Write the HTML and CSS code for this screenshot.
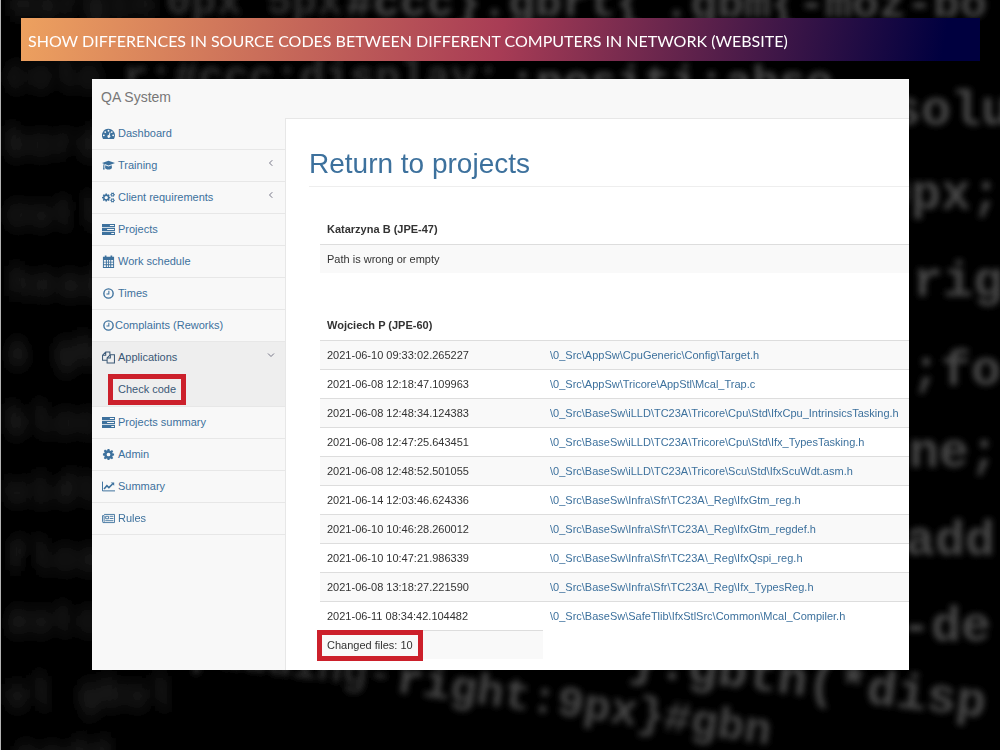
FILE: index.html
```html
<!DOCTYPE html>
<html lang="en">

<head>
    <meta charset="UTF-8">
    <meta name="viewport" content="width=device-width, initial-scale=1.0">
    <title>QA System - Check code</title>
    <link rel="stylesheet" href="styles.css">
</head>

<body>
    <!-- blurred code behind the slide -->
    <svg class="backdrop" viewBox="0 0 1000 750" preserveAspectRatio="xMidYMid slice" aria-hidden="true">
        <defs>
            <filter id="soft" x="-10%" y="-50%" width="120%" height="200%">
                <feGaussianBlur stdDeviation="3" />
            </filter>
            <filter id="far" x="-20%" y="-50%" width="140%" height="200%">
                <feGaussianBlur stdDeviation="6 9" />
            </filter>
        </defs>
        <g class="code-far" filter="url(#far)">
            <text x="10" y="16">margin</text>
            <text x="4" y="88">colo</text>
            <text x="4" y="156">bord</text>
            <text x="4" y="226">outl</text>
            <text x="8" y="296">head</text>
            <text x="4" y="364">a gb</text>
            <text x="4" y="434">bloc</text>
            <text x="4" y="502">widt</text>
            <text x="4" y="570">floa</text>
            <text x="4" y="632">auto</text>
            <text x="4" y="706">ul gbul</text>
            <text x="14" y="768">padd</text>
        </g>
        <g class="code-near" filter="url(#soft)">
            <text class="dim" x="165" y="14">0px 5px</text>
            <text x="345" y="16">#ccc}.gbrt{</text>
            <text x="662" y="17">.gbm{-moz-bo</text>
            <text class="dim" x="122" y="90">r:#ccc;display:</text>
            <text x="508" y="96">;positi:abso</text>
            <text class="big" x="890" y="125">solu</text>
            <text class="big" x="880" y="209">0px;</text>
            <text class="big" x="912" y="296">rig</text>
            <text class="big" x="910" y="385">;fo</text>
            <text class="big" x="908" y="467">ne;</text>
            <text class="big" x="904" y="555">add</text>
            <text class="big" x="900" y="641">-de</text>
            <text class="big" x="626" y="674" transform="rotate(7 626 674)">}.gbtn(*disp</text>
            <text class="dim" x="190" y="664" transform="rotate(7 190 664)">padding-</text>
            <text x="394" y="692" transform="rotate(8 394 692)">right:9px}#gbn</text>
        </g>
    </svg>

    <svg class="sprite" aria-hidden="true">
        <symbol id="i-dashboard" viewBox="0 0 14 14">
            <path fill-rule="evenodd" d="M7 2a7 7 0 0 1 7 7c0 1.300-.4 2.600-1 3.700a.5.5 0 0 1-.4.300H1.400a.5.5 0 0 1-.4-.3A7 7 0 0 1 7 2zM2 8a1 1 0 1 0 0 2 1 1 0 0 0 0-2zm1.500-3.500a1 1 0 1 0 0 2 1 1 0 0 0 0-2zM7 3a1 1 0 1 0 0 2 1 1 0 0 0 0-2zm3.500 1.500a1 1 0 1 0 0 2 1 1 0 0 0 0-2zM12 8a1 1 0 1 0 0 2 1 1 0 0 0 0-2zM8.300 5.700l-1 3a1.500 1.500 0 1 0 1 .3l.8-3z" />
        </symbol>
        <symbol id="i-training" viewBox="0 0 16 14">
            <path d="M8 1l8 3-8 3-4.600-1.700c-.4.400-.6 1.100-.6 1.800.4.400.5.900 0 1.300l.5 3.600H1.200l.5-3.600c-.5-.4-.4-.9 0-1.300 0-.8.2-1.500.5-2.300L0 4z" />
            <path d="M4 6.800l4 1.500 4-1.500.2 3c0 1.200-2 2.200-4.200 2.200s-4.200-1-4.200-2.200z" />
        </symbol>
        <symbol id="i-gear" viewBox="0 0 14 14">
            <path fill-rule="evenodd" d="M6 1h2l.3 1.700 1 .4 1.400-1 1.400 1.400-1 1.400.4 1L13 6v2l-1.500.4-.4 1 1 1.400-1.400 1.400-1.400-1-1 .4L8 13H6l-.3-1.400-1-.4-1.400 1-1.400-1.400 1-1.400-.4-1L1 8V6l1.500-.5.4-1-1-1.400 1.400-1.400 1.400 1 1-.4zM7 5a2 2 0 1 0 0 4 2 2 0 0 0 0-4z" />
        </symbol>
        <symbol id="i-gears" viewBox="0 0 16 14">
            <path fill-rule="evenodd" d="M4.300 2h1.800l.2 1.400.8.300 1.100-.8 1.300 1.300-.8 1.100.3.800 1.300.2v1.600l-1.300.2-.3.800.8 1.100-1.300 1.300-1.100-.8-.8.300L6.100 12H4.300l-.2-1.200-.8-.3-1.100.8L.9 10l.8-1.100-.3-.8L0 7.900V6.300l1.400-.2.300-.8-.8-1.100 1.300-1.300 1.100.8.800-.3zM5.200 5a2.100 2.100 0 1 0 0 4.200 2.100 2.100 0 0 0 0-4.200z" />
            <path fill-rule="evenodd" d="M12.200.8l.8.600.8-.6 1 .6-.2 1 1.200.7v1l-1.200.4.200 1.100-1 .6-.8-.7-.8.700-1-.6.200-1.100-1.100-.4v-1l1.100-.5-.2-1.200zM13 2.600a1 1 0 1 0 0 2 1 1 0 0 0 0-2z" />
            <path fill-rule="evenodd" d="M12.200 7.800l.8.600.8-.6 1 .6-.2 1 1.200.7v1l-1.200.4.200 1.100-1 .6-.8-.7-.8.700-1-.6.200-1.100-1.100-.4v-1l1.100-.5-.2-1.200zM13 9.600a1 1 0 1 0 0 2 1 1 0 0 0 0-2z" />
        </symbol>
        <symbol id="i-tasks" viewBox="0 0 14 14">
            <path fill-rule="evenodd" d="M0 1h14v3.500H0zm8.500 1.200v1.100H13V2.200zM0 5.300h14v3.500H0zm5.500 1.200v1.100H13V6.500zM0 9.600h14V13H0zm10 1.200v1.100h3v-1.100z" />
        </symbol>
        <symbol id="i-calendar" viewBox="0 0 14 14">
            <path fill-rule="evenodd" d="M1 2h2V.5h1.800V2h4.400V.5H11V2h2v12H1zm1 3.500v1.800h2.200V5.500zm3.200 0v1.800h1.400V5.500zm2.300 0v1.800h1.400V5.500zm2.400 0v1.800H12V5.500zM2 8.200V10h2.200V8.200zm3.200 0V10h1.400V8.200zm2.300 0V10h1.400V8.200zm2.400 0V10H12V8.200zM2 11v2h2.200v-2zm3.200 0v2h1.400v-2zm2.300 0v2h1.400v-2zm2.400 0v2H12v-2z" />
        </symbol>
        <symbol id="i-clock" viewBox="0 0 14 14">
            <circle class="line" cx="7" cy="7" r="5" stroke-width="1.500" />
            <path class="line" d="M7.400 4v3.500H4.800" stroke-width="1.100" />
        </symbol>
        <symbol id="i-copy" viewBox="0 0 14 14">
            <path class="line" d="M5 10H.6V4.500L4 1h4.500v3M4 1v3.500H.6M5.500 7.500L9 4h4.400v9H5.500zM9 4v3.500H5.500" stroke-width="1.100" />
        </symbol>
        <symbol id="i-chart" viewBox="0 0 16 14">
            <path class="line" d="M.6 1v11.400H16" stroke-width="1.200" />
            <path class="line" d="M2.500 10l3.500-4 2.500 2.400L13 3.900" stroke-width="1.900" />
            <path d="M10.800 2H15v4.200z" />
        </symbol>
        <symbol id="i-news" viewBox="0 0 16 14">
            <path class="line" d="M2.600 2h12.800v10H1.800c-.8 0-1.200-.4-1.200-1.200V3.500h2v7.300c0 .8-.3 1.200-.9 1.200" stroke-width="1.100" />
            <path class="line" d="M4.500 4.300h3.600v3H4.500zM9.500 4.300h4.500M9.500 7h4.500M4 9.700h10" stroke-width="1.100" />
        </symbol>
        <symbol id="i-left" viewBox="0 0 8 8">
            <path class="line" d="M5.300 1.200L2.500 4l2.800 2.800" />
        </symbol>
        <symbol id="i-down" viewBox="0 0 8 8">
            <path class="line" d="M1 2.500l3 3 3-3" />
        </symbol>
    </svg>

    <div class="slide">
        <header class="banner">SHOW DIFFERENCES IN SOURCE CODES BETWEEN DIFFERENT COMPUTERS IN NETWORK (WEBSITE)</header>

        <div class="window">
            <div class="navbar">QA System</div>
            <nav class="sidebar">
                <ul class="menu">
                    <li><a href="#"><svg class="icon"><use href="#i-dashboard" /></svg>Dashboard</a></li>
                    <li><a href="#"><svg class="icon"><use href="#i-training" /></svg>Training<svg class="arrow"><use href="#i-left" /></svg></a></li>
                    <li><a href="#"><svg class="icon"><use href="#i-gears" /></svg>Client requirements<svg class="arrow"><use href="#i-left" /></svg></a></li>
                    <li><a href="#"><svg class="icon"><use href="#i-tasks" /></svg>Projects</a></li>
                    <li><a href="#"><svg class="icon"><use href="#i-calendar" /></svg>Work schedule</a></li>
                    <li><a href="#"><svg class="icon"><use href="#i-clock" /></svg>Times</a></li>
                    <li><a href="#" class="tight"><svg class="icon"><use href="#i-clock" /></svg>Complaints (Reworks)</a></li>
                    <li class="active">
                        <a href="#"><svg class="icon"><use href="#i-copy" /></svg>Applications<svg class="arrow"><use href="#i-down" /></svg></a>
                        <ul class="submenu">
                            <li><a href="#"><span class="marked">Check code</span></a></li>
                        </ul>
                    </li>
                    <li><a href="#"><svg class="icon"><use href="#i-tasks" /></svg>Projects summary</a></li>
                    <li><a href="#"><svg class="icon"><use href="#i-gear" /></svg>Admin</a></li>
                    <li><a href="#"><svg class="icon"><use href="#i-chart" /></svg>Summary</a></li>
                    <li><a href="#"><svg class="icon"><use href="#i-news" /></svg>Rules</a></li>
                </ul>
            </nav>

            <main class="content">
                <h1><a href="#">Return to projects</a></h1>

                <table class="files">
                    <thead>
                        <tr><th colspan="2">Katarzyna B (JPE-47)</th></tr>
                    </thead>
                    <tbody>
                        <tr><td colspan="2">Path is wrong or empty</td></tr>
                    </tbody>
                </table>

                <table class="files">
                    <thead>
                        <tr><th class="date">Wojciech P (JPE-60)</th><th></th></tr>
                    </thead>
                    <tbody>
                        <tr><td>2021-06-10 09:33:02.265227</td><td><a href="#">\0_Src\AppSw\CpuGeneric\Config\Target.h</a></td></tr>
                        <tr><td>2021-06-08 12:18:47.109963</td><td><a href="#">\0_Src\AppSw\Tricore\AppStl\Mcal_Trap.c</a></td></tr>
                        <tr><td>2021-06-08 12:48:34.124383</td><td><a href="#">\0_Src\BaseSw\iLLD\TC23A\Tricore\Cpu\Std\IfxCpu_IntrinsicsTasking.h</a></td></tr>
                        <tr><td>2021-06-08 12:47:25.643451</td><td><a href="#">\0_Src\BaseSw\iLLD\TC23A\Tricore\Cpu\Std\Ifx_TypesTasking.h</a></td></tr>
                        <tr><td>2021-06-08 12:48:52.501055</td><td><a href="#">\0_Src\BaseSw\iLLD\TC23A\Tricore\Scu\Std\IfxScuWdt.asm.h</a></td></tr>
                        <tr><td>2021-06-14 12:03:46.624336</td><td><a href="#">\0_Src\BaseSw\Infra\Sfr\TC23A\_Reg\IfxGtm_reg.h</a></td></tr>
                        <tr><td>2021-06-10 10:46:28.260012</td><td><a href="#">\0_Src\BaseSw\Infra\Sfr\TC23A\_Reg\IfxGtm_regdef.h</a></td></tr>
                        <tr><td>2021-06-10 10:47:21.986339</td><td><a href="#">\0_Src\BaseSw\Infra\Sfr\TC23A\_Reg\IfxQspi_reg.h</a></td></tr>
                        <tr><td>2021-06-08 13:18:27.221590</td><td><a href="#">\0_Src\BaseSw\Infra\Sfr\TC23A\_Reg\Ifx_TypesReg.h</a></td></tr>
                        <tr><td>2021-06-11 08:34:42.104482</td><td><a href="#">\0_Src\BaseSw\SafeTlib\IfxStlSrc\Common\Mcal_Compiler.h</a></td></tr>
                        <tr><td><span class="marked">Changed files: 10</span></td></tr>
                    </tbody>
                </table>
            </main>
        </div>
    </div>
</body>

</html>
```
FILE: styles.css
```css
* {
    box-sizing: border-box;
}

body {
    margin: 0;
    min-height: 100vh;
    background: #000;
    border-left: 1px solid #b4b4b4;
    font-family: "Liberation Sans", Arial, sans-serif;
    font-size: 11px;
    line-height: 15px;
    color: #333;
}

a {
    color: #3d719d;
    text-decoration: none;
}

/* backdrop */
.backdrop {
    position: fixed;
    top: 0;
    left: 1px;
    width: 100%;
    height: 100%;
    z-index: -1;
    font-family: "Liberation Mono", monospace;
    font-weight: bold;
}

.code-far {
    fill: #2c2c2c;
    font-size: 40px;
}

.code-near {
    fill: #484848;
    font-size: 45px;
}

.code-near .dim {
    fill: #303030;
    font-size: 42px;
}

.code-near .big {
    font-size: 50px;
}

.sprite {
    position: absolute;
    width: 0;
    height: 0;
}

.line {
    fill: none;
    stroke: currentColor;
}

/* slide */
.slide {
    padding: 18px 20px;
}

.banner {
    padding: 2px 7px 0;
    background: linear-gradient(100deg, #eda15f 0%, #a83c55 50%, #00003f 96%);
    color: #fff;
    font-family: Lato, sans-serif;
    font-size: 16px;
    line-height: 41px;
}

.window {
    display: grid;
    grid-template-columns: 194px 1fr;
    margin: 18px 71px 0;
    background: #fff;
    overflow: hidden;
}

.navbar {
    grid-column: 1 / 3;
    padding: 0 9px;
    background: #f8f8f8;
    color: #777;
    font-size: 14px;
    line-height: 36px;
    height: 39px;
}

/* sidebar */
.sidebar {
    background: #f8f8f8;
    border-right: 1px solid #e7e7e7;
}

.menu,
.submenu {
    margin: 0;
    padding: 0;
    list-style: none;
}

.menu > li {
    border-bottom: 1px solid #e7e7e7;
}

.menu a {
    display: flex;
    align-items: center;
    gap: 3px;
    height: 31px;
    padding: 0 10px;
}

.menu .tight {
    gap: 0;
}

.menu .active {
    background: #eee;
}

.menu .active a {
    color: #3a5876;
}

.menu .submenu a {
    height: 33px;
    padding-left: 26px;
}

.icon {
    width: 13px;
    height: 13px;
    fill: currentColor;
}

.arrow {
    width: 8px;
    height: 8px;
    margin: 0 0 6px auto;
    color: #778;
}

.marked {
    display: inline-block;
    line-height: 11px;
    outline: 5px solid #cc202b;
    outline-offset: 5px;
}

/* content */
.content {
    min-width: 0;
    padding: 26px 0 11px 23px;
    border-top: 1px solid #e7e7e7;
}

h1 {
    margin: 0 0 28px;
    padding-bottom: 3px;
    border-bottom: 1px solid #eee;
    font-size: 28px;
    font-weight: normal;
    line-height: 38px;
}

.files {
    width: calc(100% - 11px);
    margin: 0 0 38px 11px;
    border-collapse: separate;
    border-spacing: 0;
    white-space: nowrap;
}

.files:last-child {
    margin-bottom: 0;
}

.files th,
.files td {
    height: 29px;
    padding: 0 7px;
    text-align: left;
}

.files td {
    border-top: 1px solid #ddd;
}

.files tr:nth-child(odd) td {
    background: #f9f9f9;
}

.files .date {
    width: 223px;
}
```
